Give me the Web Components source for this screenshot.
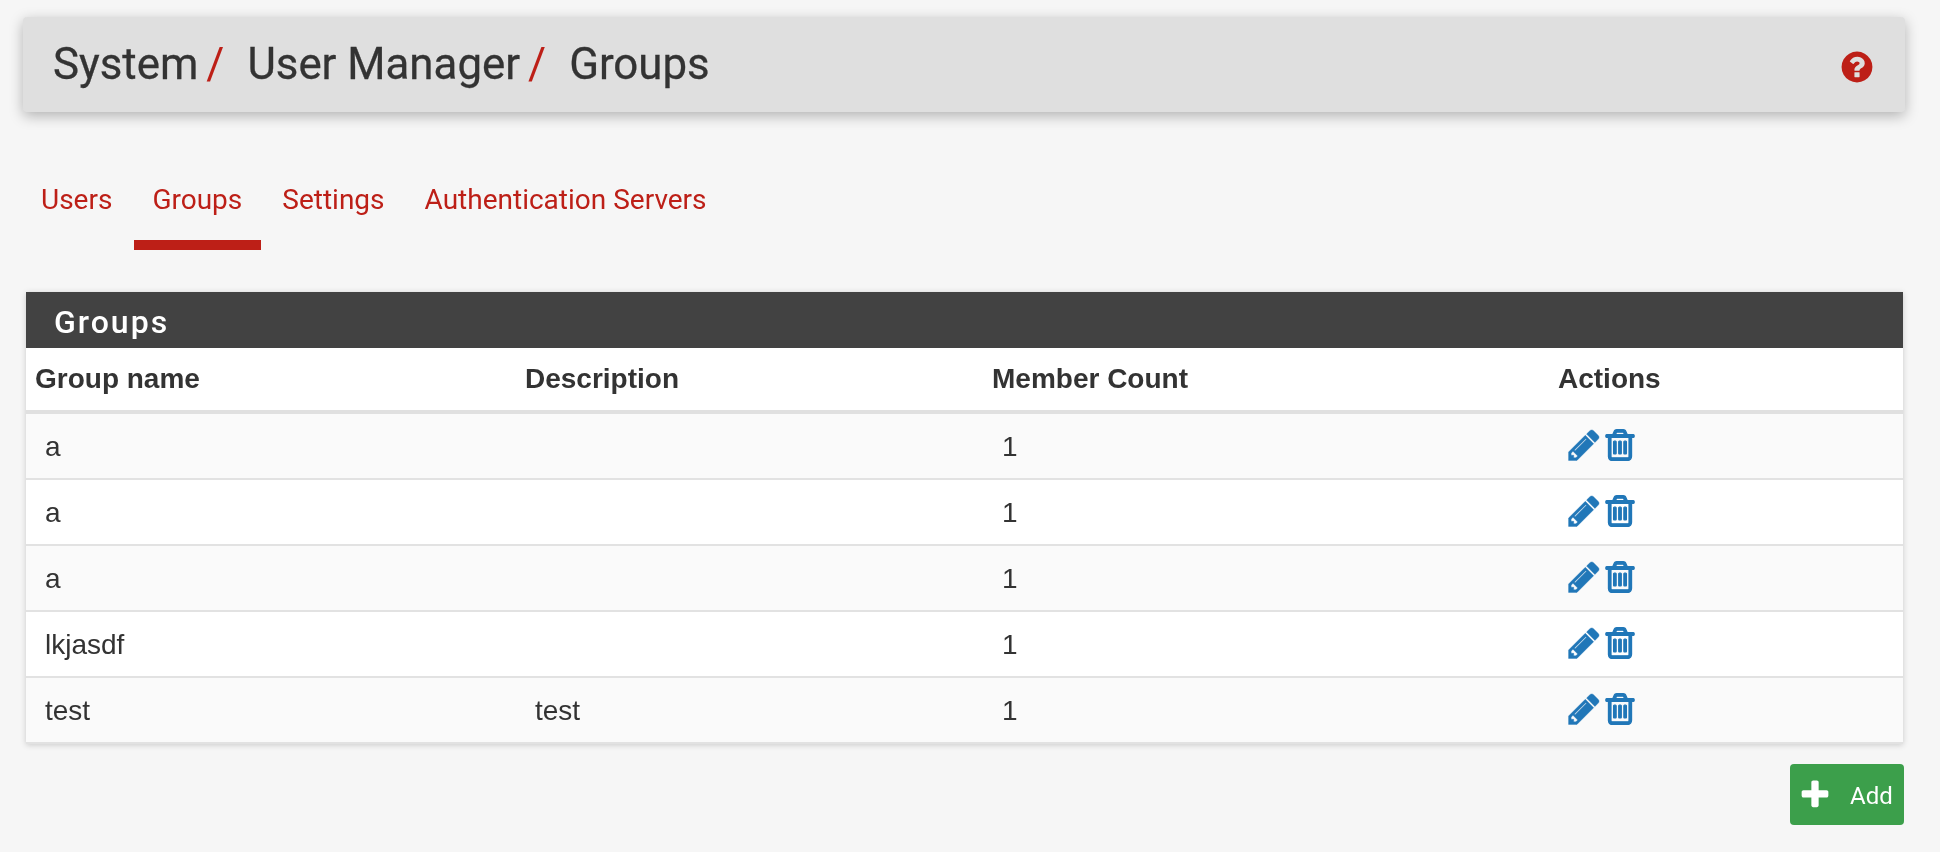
<!DOCTYPE html>
<html><head><meta charset="utf-8"><title>Groups</title>
<style>
html,body{margin:0;padding:0;background:#f6f6f6;height:100%;overflow:hidden}
body{font-family:"Liberation Sans",Arial,sans-serif}
app-page{display:block;filter:blur(.45px)}
</style></head><body>
<app-page>
  <page-header>
    <span>System</span><span>User Manager</span><span>Groups</span>
  </page-header>
  <tab-nav>
    <tab-link>Users</tab-link>
    <tab-link active>Groups</tab-link>
    <tab-link>Settings</tab-link>
    <tab-link>Authentication Servers</tab-link>
  </tab-nav>
  <data-panel title-text="Groups">
    <group-row head><span>Group name</span><span>Description</span><span>Member Count</span><span>Actions</span></group-row>
    <group-row odd name="a" count="1"></group-row>
    <group-row name="a" count="1"></group-row>
    <group-row odd name="a" count="1"></group-row>
    <group-row name="lkjasdf" count="1"></group-row>
    <group-row odd name="test" desc="test" count="1"></group-row>
  </data-panel>
  <add-button>Add</add-button>
</app-page>
<script>
const P={
 pencil:"M491 1536l91-91-235-235-91 91v107h128v128h107zm523-928q0-22-22-22-10 0-17 7l-542 542q-7 7-7 17 0 22 22 22 10 0 17-7l542-542q7-7 7-17zm-54-192l416 416-832 832h-416v-416zm683 96q0 53-37 90l-166 166-416-416 166-165q36-38 90-38 53 0 91 38l235 234q37 39 37 91z",
 trash:"M704 736v576q0 14-9 23t-23 9h-64q-14 0-23-9t-9-23v-576q0-14 9-23t23-9h64q14 0 23 9t9 23zm256 0v576q0 14-9 23t-23 9h-64q-14 0-23-9t-9-23v-576q0-14 9-23t23-9h64q14 0 23 9t9 23zm256 0v576q0 14-9 23t-23 9h-64q-14 0-23-9t-9-23v-576q0-14 9-23t23-9h64q14 0 23 9t9 23zm128 724v-948h-896v948q0 22 7 40.500t14.500 27 10.500 8.500h832q3 0 10.500-8.500t14.500-27 7-40.500zm-672-1076h448l-48-117q-7-9-17-11h-317q-10 2-17 11zm928 32v64q0 14-9 23t-23 9h-96v948q0 83-47 143.500t-113 60.500h-832q-66 0-113-58.500t-47-141.500v-952h-96q-14 0-23-9t-9-23v-64q0-14 9-23t23-9h309l70-167q15-37 54-63t79-26h320q40 0 79 26t54 63l70 167h309q14 0 23 9t9 23z",
 help:"M1024 1376v-192q0-14-9-23t-23-9h-192q-14 0-23 9t-9 23v192q0 14 9 23t23 9h192q14 0 23-9t9-23zm256-672q0-88-55.500-163t-138.500-116-170-41q-243 0-371 213-15 24 8 42l132 100q7 6 19 6 16 0 25-12 53-68 86-92 34-24 86-24 48 0 85.500 26t37.500 59q0 38-20 61t-68 45q-63 28-115.500 86.500t-52.500 125.500v36q0 14 9 23t23 9h192q14 0 23-9t9-23q0-19 21.500-49.500t54.500-49.500q32-18 49-28.500t46-35 44.500-48 28-60.500 12.500-81zm384 192q0 209-103 385.500t-279.500 279.500-385.500 103-385.500-103-279.500-279.500-103-385.500 103-385.500 279.500-279.500 385.500-103 385.500 103 279.500 279.500 103 385.500z",
 plus:"M1600 736v192q0 40-28 68t-68 28h-416v416q0 40-28 68t-68 28h-192q-40 0-68-28t-28-68v-416h-416q-40 0-68-28t-28-68v-192q0-40 28-68t68-28h416v-416q0-40 28-68t68-28h192q40 0 68 28t28 68v416h416q40 0 68 28t28 68z"
};
const icon=(n,s,c,sw=0)=>`<svg width="${s}" height="${s}" viewBox="0 0 1792 1792" fill="${c}" ${sw?`stroke="${c}" stroke-width="${sw}"`:""} aria-hidden="true"><path d="${P[n]}"/></svg>`;
class Base extends HTMLElement{
  render(html){ if(!this.shadowRoot) this.attachShadow({mode:"open"}); this.shadowRoot.innerHTML=html; }
}
customElements.define("page-header",class extends Base{connectedCallback(){
  const parts=[...this.children].map(e=>e.textContent);
  this.render(`<style>
  :host{display:flex;align-items:center;justify-content:space-between;box-sizing:border-box;margin:17px 35px 0 23px;height:95px;padding:0 30px 0 30px;background:#dfdfdf;border-radius:4px;box-shadow:0 4px 14px rgba(0,0,0,.28);font:400 43.8px/1 Roboto,sans-serif;color:#333;-webkit-text-stroke:.3px #333}
  h1{margin:0;font:inherit;display:flex;align-items:baseline}
  i{font-style:normal;color:#bd1f17;-webkit-text-stroke:0;margin:0 23px 0 8px}
  svg{display:block;margin-top:4px}
  </style><h1>${parts.map((p,i)=>`<span>${p}</span>`+(i<parts.length-1?`<i>/</i>`:"")).join("")}</h1>${icon("help",36,"#bd1f17")}`);
}});
customElements.define("tab-nav",class extends Base{connectedCallback(){
  this.render(`<style>:host{display:flex;margin:0 0 0 23px;padding-top:68px;height:112px}</style><slot></slot>`);
}});
customElements.define("tab-link",class extends Base{connectedCallback(){
  const a=this.hasAttribute("active");
  this.render(`<style>:host{display:block;box-sizing:border-box;height:70px;padding:5px 19px 0 18px;margin-right:3px;font:400 28px/30px Roboto,sans-serif;color:#bd1f17;${a?"border-bottom:10px solid #bd1f17;":""}}</style><slot></slot>`);
}});
customElements.define("data-panel",class extends Base{connectedCallback(){
  this.render(`<style>:host{display:block;margin:0 37px 0 26px;background:#fff;box-shadow:0 1px 6px rgba(0,0,0,.18)}
  h2{margin:0;height:56px;box-sizing:border-box;padding-left:28px;background:#424242;color:#fff;font:500 32px/60px Roboto,sans-serif;letter-spacing:2px}
  </style><h2>${this.getAttribute("title-text")}</h2><slot></slot>`);
}});
customElements.define("group-row",class extends Base{connectedCallback(){
  const head=this.hasAttribute("head"),odd=this.hasAttribute("odd");
  const base=`<style>:host{display:grid;box-sizing:border-box;align-items:center;font:400 28px/30px "Liberation Sans",Arial,sans-serif;color:#333;
   ${head?"height:66px;border-bottom:4px solid #e0e0e0;font-weight:700;padding-left:9px;grid-template-columns:490px 467px 566px 1fr;":`height:66px;border-bottom:2px solid #e2e2e2;background:${odd?"#fafafa":"#fff"};padding-left:19px;grid-template-columns:490px 467px 566px 1fr;`}}
   .a{display:flex;align-items:center;transform:translate(-2px,-1px)}svg{display:block}
   .t{padding-top:2px}
   ::slotted(span){display:block}
   </style>`;
  if(head){this.render(base+`<slot></slot>`);return;}
  const g=n=>this.getAttribute(n)||"";
  this.render(base+`<span class="t">${g("name")}</span><span class="t">${g("desc")}</span><span class="t">${g("count")}</span>
   <span class="a">${icon("pencil",36,"#2177b8",20)}${icon("trash",36,"#2177b8",60)}</span>`);
}});
customElements.define("add-button",class extends Base{connectedCallback(){
  this.render(`<style>:host{display:flex;width:114px;height:61px;margin:20px 36px 0 auto;box-sizing:border-box;align-items:center;padding-left:8px;background:#3c9f4b;color:#fff;border-radius:4px;font:400 24px/1 Roboto,sans-serif}
  span{margin-left:18px;padding-top:2px}svg{display:block}</style>${icon("plus",34,"#fff")}<span><slot></slot></span>`);
}});
</script>
</body></html>
